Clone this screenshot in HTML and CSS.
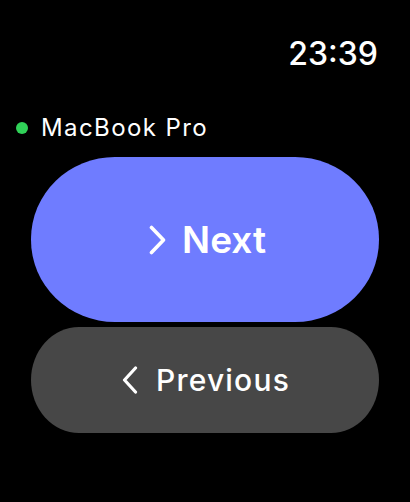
FILE: index.html
```html
<!DOCTYPE html>
<html>
<head>
<meta charset="utf-8">
<link rel="stylesheet" href="styles.css">
</head>
<body>
<div class="screen">
  <div class="header"><span class="time">23:39</span></div>
  <div class="device"><span class="dot"></span><span class="device-name">MacBook Pro</span></div>
  <div class="buttons">
    <div class="btn btn-next">
      <svg class="chev chev-next" width="17" height="30" viewBox="0 0 17 30"><path d="M2.5 2.5 L14.5 15 L2.5 27.5" fill="none" stroke="#fff" stroke-width="3.6" stroke-linecap="round" stroke-linejoin="round"/></svg>
      <span class="label label-next">Next</span>
    </div>
    <div class="btn btn-prev">
      <svg class="chev chev-prev" width="16" height="28" viewBox="0 0 16 28"><path d="M13.5 2 L2.5 14 L13.5 26" fill="none" stroke="#fff" stroke-width="3.2" stroke-linecap="round" stroke-linejoin="round"/></svg>
      <span class="label label-prev">Previous</span>
    </div>
  </div>
</div>
</body>
</html>
```
FILE: styles.css
```css
html, body {
  margin: 0;
  padding: 0;
  background: #000;
}
body {
  width: 410px;
  height: 502px;
  overflow: hidden;
  font-family: Inter, "Liberation Sans", sans-serif;
  color: #fff;
}
.screen {
  display: flex;
  flex-direction: column;
}
.header {
  display: flex;
  justify-content: flex-end;
  padding: 38px 32px 0 0;
}
.time {
  font-size: 32px;
  line-height: 32px;
  font-weight: 500;
  letter-spacing: 0;
}
.device {
  display: flex;
  align-items: center;
  gap: 13px;
  margin-top: 46px;
  padding-left: 16px;
  height: 24px;
}
.dot {
  width: 12px;
  height: 12px;
  border-radius: 50%;
  background: #30d158;
  flex: none;
}
.device-name {
  font-size: 24px;
  line-height: 24px;
  font-weight: 400;
  letter-spacing: 1.4px;
}
.buttons {
  display: flex;
  flex-direction: column;
  gap: 5px;
  padding: 0 31px;
  margin-top: 17px;
}
.btn {
  display: flex;
  align-items: center;
  justify-content: center;
}
.btn-next {
  height: 165px;
  background: #6f7cff;
  border-radius: 84px / 82px;
  gap: 16px;
  padding-left: 5px;
}
.btn-prev {
  height: 106px;
  background: #474747;
  border-radius: 48px / 53px;
  gap: 18px;
  padding-left: 2px;
}
.chev { flex: none; display: block; }
.label-next {
  font-size: 37px;
  line-height: 40px;
  font-weight: 600;
  letter-spacing: 0;
}
.label-prev {
  font-size: 30px;
  line-height: 34px;
  font-weight: 500;
  letter-spacing: 1.2px;
}
```
